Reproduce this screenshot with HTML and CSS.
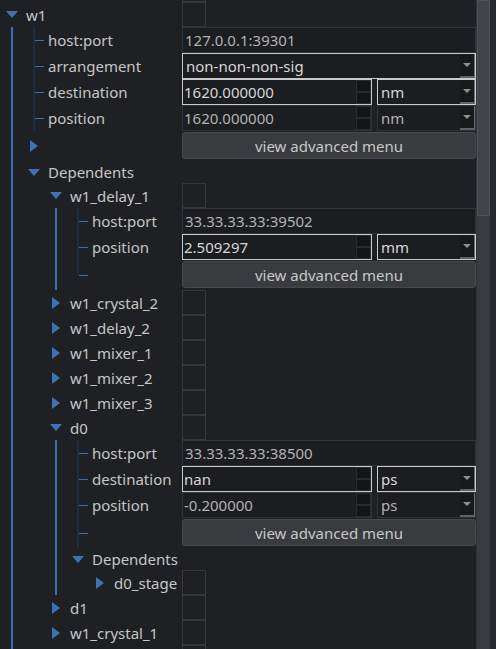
FILE: index.html
```html
<!DOCTYPE html>
<html>
<head>
<meta charset="utf-8">
<link rel="stylesheet" href="styles.css">
</head>
<body>
<div class="tree">
  <div class="row r-item"><div class="lab"></div><div class="val"><div class="sq"></div></div></div>

  <div class="row r-item"><div class="lab"><span class="g open"><svg width="12" height="7" viewBox="0 0 12 7"><polygon points="0,0 12,0 6,7"/></svg></span><span class="txt">w1</span></div><div class="val"><div class="sq"></div></div></div>

  <div class="row r-field"><div class="lab"><span class="g v"></span><span class="g br"></span><span class="txt">host:port</span></div><div class="val"><div class="field ro"><span class="t">127.0.0.1:39301</span></div></div></div>

  <div class="row r-field"><div class="lab"><span class="g v"></span><span class="g br"></span><span class="txt">arrangement</span></div><div class="val"><div class="combo wide on"><span class="t">non-non-non-sig</span><span class="arrow"><svg width="8" height="4" viewBox="0 0 8 4"><polygon points="0,0 8,0 4,4"/></svg></span></div></div></div>

  <div class="row r-field"><div class="lab"><span class="g v"></span><span class="g br"></span><span class="txt">destination</span></div><div class="val"><div class="spin on"><span class="t">1620.000000</span><span class="sb"><i></i><i></i></span></div><div class="combo unit on"><span class="t">nm</span><span class="arrow"><svg width="8" height="4" viewBox="0 0 8 4"><polygon points="0,0 8,0 4,4"/></svg></span></div></div></div>

  <div class="row r-field"><div class="lab"><span class="g v"></span><span class="g br"></span><span class="txt">position</span></div><div class="val"><div class="spin"><span class="t">1620.000000</span><span class="sb"><i></i><i></i></span></div><div class="combo unit"><span class="t">nm</span><span class="arrow"><svg width="8" height="4" viewBox="0 0 8 4"><polygon points="0,0 8,0 4,4"/></svg></span></div></div></div>

  <div class="row r-btn"><div class="lab"><span class="g v"></span><span class="g shut"><svg width="8" height="12" viewBox="0 0 8 12"><polygon points="0,0 8,6 0,12"/></svg></span></div><div class="val"><button class="btn">view advanced menu</button></div></div>

  <div class="row r-dep"><div class="lab"><span class="g v"></span><span class="g open"><svg width="12" height="7" viewBox="0 0 12 7"><polygon points="0,0 12,0 6,7"/></svg></span><span class="txt">Dependents</span></div><div class="val"></div></div>

  <div class="row r-item"><div class="lab"><span class="g v"></span><span class="g"></span><span class="g open"><svg width="12" height="7" viewBox="0 0 12 7"><polygon points="0,0 12,0 6,7"/></svg></span><span class="txt">w1_delay_1</span></div><div class="val"><div class="sq"></div></div></div>

  <div class="row r-field"><div class="lab"><span class="g v"></span><span class="g"></span><span class="g v"></span><span class="g br"></span><span class="txt">host:port</span></div><div class="val"><div class="field ro"><span class="t">33.33.33.33:39502</span></div></div></div>

  <div class="row r-field"><div class="lab"><span class="g v"></span><span class="g"></span><span class="g v"></span><span class="g br"></span><span class="txt">position</span></div><div class="val"><div class="spin on"><span class="t">2.509297</span><span class="sb"><i></i><i></i></span></div><div class="combo unit on"><span class="t">mm</span><span class="arrow"><svg width="8" height="4" viewBox="0 0 8 4"><polygon points="0,0 8,0 4,4"/></svg></span></div></div></div>

  <div class="row r-btn"><div class="lab"><span class="g v"></span><span class="g"></span><span class="g v"></span><span class="g end"></span></div><div class="val"><button class="btn">view advanced menu</button></div></div>

  <div class="row r-item"><div class="lab"><span class="g v"></span><span class="g"></span><span class="g shut"><svg width="8" height="12" viewBox="0 0 8 12"><polygon points="0,0 8,6 0,12"/></svg></span><span class="txt">w1_crystal_2</span></div><div class="val"><div class="sq"></div></div></div>

  <div class="row r-item"><div class="lab"><span class="g v"></span><span class="g"></span><span class="g shut"><svg width="8" height="12" viewBox="0 0 8 12"><polygon points="0,0 8,6 0,12"/></svg></span><span class="txt">w1_delay_2</span></div><div class="val"><div class="sq"></div></div></div>

  <div class="row r-item"><div class="lab"><span class="g v"></span><span class="g"></span><span class="g shut"><svg width="8" height="12" viewBox="0 0 8 12"><polygon points="0,0 8,6 0,12"/></svg></span><span class="txt">w1_mixer_1</span></div><div class="val"><div class="sq"></div></div></div>

  <div class="row r-item"><div class="lab"><span class="g v"></span><span class="g"></span><span class="g shut"><svg width="8" height="12" viewBox="0 0 8 12"><polygon points="0,0 8,6 0,12"/></svg></span><span class="txt">w1_mixer_2</span></div><div class="val"><div class="sq"></div></div></div>

  <div class="row r-item"><div class="lab"><span class="g v"></span><span class="g"></span><span class="g shut"><svg width="8" height="12" viewBox="0 0 8 12"><polygon points="0,0 8,6 0,12"/></svg></span><span class="txt">w1_mixer_3</span></div><div class="val"><div class="sq"></div></div></div>

  <div class="row r-item"><div class="lab"><span class="g v"></span><span class="g"></span><span class="g open"><svg width="12" height="7" viewBox="0 0 12 7"><polygon points="0,0 12,0 6,7"/></svg></span><span class="txt">d0</span></div><div class="val"><div class="sq"></div></div></div>

  <div class="row r-field"><div class="lab"><span class="g v"></span><span class="g"></span><span class="g v"></span><span class="g br"></span><span class="txt">host:port</span></div><div class="val"><div class="field ro"><span class="t">33.33.33.33:38500</span></div></div></div>

  <div class="row r-field"><div class="lab"><span class="g v"></span><span class="g"></span><span class="g v"></span><span class="g br"></span><span class="txt">destination</span></div><div class="val"><div class="spin on"><span class="t">nan</span><span class="sb"><i></i><i></i></span></div><div class="combo unit on"><span class="t">ps</span><span class="arrow"><svg width="8" height="4" viewBox="0 0 8 4"><polygon points="0,0 8,0 4,4"/></svg></span></div></div></div>

  <div class="row r-field"><div class="lab"><span class="g v"></span><span class="g"></span><span class="g v"></span><span class="g br"></span><span class="txt">position</span></div><div class="val"><div class="spin"><span class="t">-0.200000</span><span class="sb"><i></i><i></i></span></div><div class="combo unit"><span class="t">ps</span><span class="arrow"><svg width="8" height="4" viewBox="0 0 8 4"><polygon points="0,0 8,0 4,4"/></svg></span></div></div></div>

  <div class="row r-btn"><div class="lab"><span class="g v"></span><span class="g"></span><span class="g v"></span><span class="g br"></span></div><div class="val"><button class="btn">view advanced menu</button></div></div>

  <div class="row r-dep"><div class="lab"><span class="g v"></span><span class="g"></span><span class="g v"></span><span class="g open"><svg width="12" height="7" viewBox="0 0 12 7"><polygon points="0,0 12,0 6,7"/></svg></span><span class="txt">Dependents</span></div><div class="val"></div></div>

  <div class="row r-item"><div class="lab"><span class="g v"></span><span class="g"></span><span class="g v"></span><span class="g"></span><span class="g shut"><svg width="8" height="12" viewBox="0 0 8 12"><polygon points="0,0 8,6 0,12"/></svg></span><span class="txt">d0_stage</span></div><div class="val"><div class="sq"></div></div></div>

  <div class="row r-item"><div class="lab"><span class="g v"></span><span class="g"></span><span class="g shut"><svg width="8" height="12" viewBox="0 0 8 12"><polygon points="0,0 8,6 0,12"/></svg></span><span class="txt">d1</span></div><div class="val"><div class="sq"></div></div></div>

  <div class="row r-item"><div class="lab"><span class="g v"></span><span class="g"></span><span class="g shut"><svg width="8" height="12" viewBox="0 0 8 12"><polygon points="0,0 8,6 0,12"/></svg></span><span class="txt">w1_crystal_1</span></div><div class="val"><div class="sq"></div></div></div>

  <div class="row r-item"><div class="lab"><span class="g v"></span><span class="g"></span></div><div class="val"><div class="sq"></div></div></div>
</div>
<div class="scroll"><div class="handle"></div></div>
<div class="edge"></div>
</body>
</html>
```

FILE: styles.css
```css
* { box-sizing: border-box; }

body {
  margin: 0;
  height: 649px;
  overflow: hidden;
  display: flex;
  align-items: flex-start;
  background: #1f2023;
  color: #c6c6c6;
  font-family: "Noto Sans", "Open Sans", sans-serif;
  font-size: 15px;
}

.tree {
  width: 477px;
  flex: none;
  margin-top: -23px;
  padding-bottom: 40px;
  border-right: 1px solid #313337;
}

.scroll {
  width: 13px;
  height: 649px;
  flex: none;
  background: #383b40;
}

.handle {
  height: 216px;
  background: #404348;
  border: 1px solid #4d5056;
}

.edge {
  width: 6px;
  height: 649px;
  flex: none;
  background: #27292c;
}

.row { display: flex; }
.r-item { height: 25px; }
.r-field { height: 26px; }
.r-btn { height: 30px; }
.r-dep { height: 22px; }

.lab {
  width: 182px;
  flex: none;
  display: flex;
  overflow: hidden;
}

.val {
  width: 294px;
  flex: none;
  display: flex;
}

.txt {
  align-self: center;
  padding-left: 4px;
  white-space: nowrap;
  line-height: 20px;
}

.g {
  width: 22px;
  flex: none;
  display: flex;
  align-items: center;
}

.g svg { fill: #3d72b6; display: block; }
.open svg { margin-left: 6px; }
.shut svg { margin-left: 8px; }

.v {
  background: linear-gradient(#3b6fb0, #3b6fb0) 11px 0 / 2px 100% no-repeat;
}

.br {
  background:
    linear-gradient(#3b6fb0, #3b6fb0) 13px 50% / 9px 1px no-repeat,
    linear-gradient(#1d2c40, #1d2c40) 11px 0 / 2px 100% no-repeat;
}

.end {
  background:
    linear-gradient(#3b6fb0, #3b6fb0) 13px 50% / 9px 1px no-repeat,
    linear-gradient(#1d2c40, #1d2c40) 11px 0 / 2px 50% no-repeat;
}

.sq {
  width: 24px;
  height: 25px;
  border: 1px solid #36373a;
}

.field, .spin, .combo {
  height: 26px;
  border: 1px solid #313336;
  background: #1c1d20;
  display: flex;
  color: #b2b2b2;
}

.on {
  border-color: #cacaca;
  color: #d6d6d6;
}

.t {
  flex: 1;
  display: flex;
  align-items: center;
  white-space: nowrap;
  line-height: 20px;
}

.field { flex: 1; padding-left: 2px; }

.spin { width: 190px; flex: none; padding-left: 1px; }

.sb {
  width: 15px;
  display: flex;
  flex-direction: column;
}

.sb i {
  flex: 1;
  background: #141517;
  border: 1px solid #2a2b2e;
}

.combo.wide { flex: 1; }
.combo.unit { width: 99px; flex: none; margin-left: 5px; }
.combo .t { padding-left: 3px; }

.arrow {
  width: 15px;
  display: flex;
  align-items: center;
  justify-content: center;
  background: #18191b;
  border-right: 1px solid #6a6d72;
  border-bottom: 2px solid #5f6267;
  padding-bottom: 1px;
}

.arrow svg { fill: #8f8f8f; display: block; }

.btn {
  width: 294px;
  height: 27px;
  margin-top: 1px;
  padding: 0;
  background: #3a3b3e;
  border: 1px solid #47484c;
  border-radius: 3px;
  color: #c8c8c8;
  font: inherit;
  line-height: 20px;
}
```
